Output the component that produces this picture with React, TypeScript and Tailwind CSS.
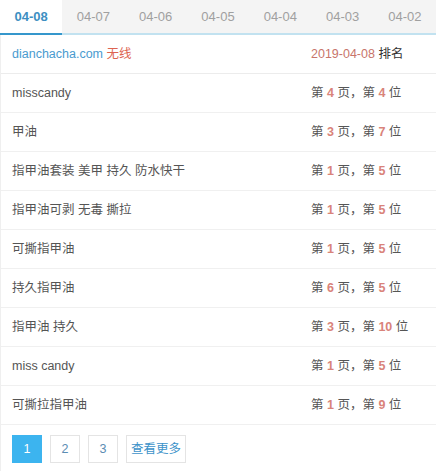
import React from 'react';

const tabs = ['04-08', '04-07', '04-06', '04-05', '04-04', '04-03', '04-02'];

const rows = [
  { word: 'misscandy', page: 4, pos: 4 },
  { word: '甲油', page: 3, pos: 7 },
  { word: '指甲油套装 美甲 持久 防水快干', page: 1, pos: 5 },
  { word: '指甲油可剥 无毒 撕拉', page: 1, pos: 5 },
  { word: '可撕指甲油', page: 1, pos: 5 },
  { word: '持久指甲油', page: 6, pos: 5 },
  { word: '指甲油 持久', page: 3, pos: 10 },
  { word: 'miss candy', page: 1, pos: 5 },
  { word: '可撕拉指甲油', page: 1, pos: 9 },
];

const App: React.FC = () => {
  return (
    <div
      className="w-[436px] h-[472px] bg-white text-[12.5px] text-[#555]"
      style={{ fontFamily: '"Liberation Sans", Arial, "Noto Sans CJK SC", sans-serif' }}
    >
      {/* Date tabs */}
      <div className="grid grid-cols-7 h-[35px] bg-[#f4f4f4] border-b-2 border-[#c2e2f0]">
        {tabs.map((t, i) => (
          <div
            key={t}
            className={
              i === 0
                ? 'flex items-center justify-center bg-white text-[#3d8fc2] text-[13px] font-bold -mb-[2px] border-b-2 border-[#3597cc]'
                : 'flex items-center justify-center text-[#a0a0a0] text-[13px]'
            }
          >
            {t}
          </div>
        ))}
      </div>

      <div className="border-l border-[#efefef]">
        {/* Header row */}
        <div className="flex items-center h-[39px] border-b border-[#ececec] pl-[11px]">
          <div className="flex-1">
            <span className="text-[#4a9bcf]">dianchacha.com</span>{' '}
            <span className="text-[#dd6450]">无线</span>
          </div>
          <div className="w-[125px]">
            <span className="text-[#c8756b]">2019-04-08</span> <span className="text-[#333]">排名</span>
          </div>
        </div>

        {rows.map((r, i) => (
          <div key={i} className="flex items-center h-[39px] border-b border-[#f0f0f0] pl-[11px]">
            <div className="flex-1">{r.word}</div>
            <div className="w-[125px]">
              第 <b className="text-[#d9837a]">{r.page}</b> 页，第 <b className="text-[#d9837a]">{r.pos}</b> 位
            </div>
          </div>
        ))}

        {/* Pagination */}
        <div className="flex gap-2 pl-[11px] pt-[10px] pb-[8px]">
          <button className="w-[30px] h-[28px] bg-[#3cb4ef] text-white">1</button>
          <button className="w-[30px] h-[28px] border border-[#e4e4e4] text-[#5b8db3]">2</button>
          <button className="w-[30px] h-[28px] border border-[#e4e4e4] text-[#5b8db3]">3</button>
          <button className="px-[4px] h-[28px] border border-[#e4e4e4] text-[#3d93c9]">查看更多</button>
        </div>
      </div>
    </div>
  );
};

export default App;
